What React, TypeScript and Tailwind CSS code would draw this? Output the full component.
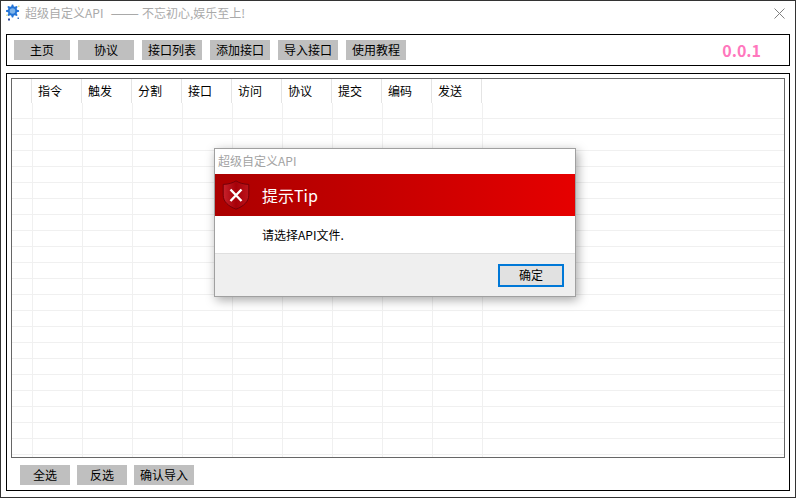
const font = "font-['Microsoft_YaHei','Noto_Sans_CJK_SC',sans-serif]";

const topButtons = [
  { label: "主页", width: "w-14" },
  { label: "协议", width: "w-14" },
  { label: "接口列表", width: "w-[60px]" },
  { label: "添加接口", width: "w-[60px]" },
  { label: "导入接口", width: "w-[60px]" },
  { label: "使用教程", width: "w-[60px]" },
];

const columns = ["指令", "触发", "分割", "接口", "访问", "协议", "提交", "编码", "发送"];
const rows = Array.from({ length: 23 }, (_, i) => i);

// 8-tooth gear outline around (12.5, 11)
const gearPoints = Array.from({ length: 32 }, (_, i) => {
  const a = ((i - 0.5) * Math.PI) / 16;
  const r = i % 4 < 2 ? 6.6 : 4.7;
  return `${(12.5 + r * Math.cos(a)).toFixed(2)},${(11 + r * Math.sin(a)).toFixed(2)}`;
}).join(" ");

function GrayButton({ label, width }: { label: string; width: string }) {
  return (
    <button className={`${width} h-5 bg-[#bfbfbf] text-xs leading-5 text-black`}>
      {label}
    </button>
  );
}

function AppIcon() {
  return (
    <svg width="15" height="18" viewBox="6 4 15 18" className="shrink-0">
      <polygon points={gearPoints} fill="#2273d6" />
      <circle cx="12.500" cy="11" r="2.800" fill="#7fb4ea" />
      <rect x="8" y="18.500" width="2" height="2" fill="#2c4aa0" />
      <rect x="17.500" y="17.500" width="1.500" height="1.500" fill="#3a6fc0" />
      <rect x="18" y="5.500" width="1.500" height="1.500" fill="#dfe39a" />
      <rect x="6" y="14.500" width="1.500" height="1.500" fill="#dfe39a" />
    </svg>
  );
}

function ShieldIcon() {
  return (
    <svg width="28" height="30" viewBox="0 0 28 30" className="shrink-0">
      <defs>
        <linearGradient id="shieldFill" x1="0" y1="0" x2="1" y2="0">
          <stop offset="0" stopColor="#c8222c" />
          <stop offset="0.500" stopColor="#a60008" />
          <stop offset="1" stopColor="#bc141c" />
        </linearGradient>
      </defs>
      <path
        d="M14 .8c3 2.200 7.500 3.400 12.800 3.600v10.800c0 6.500-5.400 11.200-12.800 14-7.400-2.800-12.800-7.500-12.800-14V4.400C6.500 4.200 11 3 14 .8z"
        fill="url(#shieldFill)"
        stroke="#740008"
        strokeWidth="1"
      />
      <path d="M8.500 9.500l11 11.500M19.500 9.500l-11 11.500" stroke="#fff" strokeWidth="2.400" />
    </svg>
  );
}

export default function App() {
  return (
    <div className={`${font} relative flex h-[498px] w-[796px] flex-col overflow-hidden border border-[#333] bg-white`}>
      <div className="flex h-[33px] items-center pl-[5px] pr-[10px] pb-[9px]">
        <AppIcon />
        <span className="ml-1 flex items-center text-xs text-[#a9a9a9]">
          超级自定义API
          <span className="ml-[7px] mr-[3px] pb-[3px] text-[17px] leading-none">——</span>
          不忘初心,娱乐至上!
        </span>
        <svg width="11" height="11" viewBox="0 0 11 11" className="ml-auto">
          <path d="M.5.500l10 10M10.500.500l-10 10" stroke="#808080" strokeWidth="1" />
        </svg>
      </div>

      <div className="mx-[5px] flex h-8 items-center gap-2 border border-black pl-[7px] pr-[28px]">
        {topButtons.map((b) => (
          <GrayButton key={b.label} label={b.label} width={b.width} />
        ))}
        <span className="ml-auto text-base font-bold text-[#ff77bd]">0.0.1</span>
      </div>

      <div className="mx-[5px] mt-[7px] h-[418px] border border-black px-1 pt-1">
        <div className="h-[380px] overflow-hidden border border-[#666]">
          <div className="flex h-6">
            <div className="w-5 shrink-0 border-r border-[#e4e4e4]" />
            {columns.map((c) => (
              <div key={c} className="w-[50px] shrink-0 border-r border-[#e4e4e4] pl-[6px] text-xs leading-6 text-black">
                {c}
              </div>
            ))}
          </div>
          {rows.map((r) => (
            <div key={r} className="flex h-4 border-b border-[#f0f0f0]">
              <div className="w-[21px] shrink-0 border-r border-[#f0f0f0]" />
              {columns.map((c) => (
                <div key={c} className="h-full w-[50px] shrink-0 border-r border-[#f0f0f0]" />
              ))}
            </div>
          ))}
        </div>
        <div className="ml-[9px] mt-[7px] flex gap-[7px]">
          <GrayButton label="全选" width="w-[50px]" />
          <GrayButton label="反选" width="w-[50px]" />
          <GrayButton label="确认导入" width="w-[60px]" />
        </div>
      </div>

      <div className="absolute left-[213px] top-[147px] flex h-[149px] w-[362px] flex-col border border-[#a0a0a0] bg-white shadow-[2px_3px_10px_rgba(0,0,0,0.35)]">
        <div className="flex h-[25px] shrink-0 items-center pb-[2px] pl-[3px] text-xs text-[#a3a3a3]">超级自定义API</div>
        <div className="flex h-[42px] shrink-0 items-center bg-gradient-to-r from-[#ab0000] to-[#e60000] pl-[7px]">
          <ShieldIcon />
          <span className="ml-[12px] text-base text-white">提示Tip</span>
        </div>
        <div className="flex h-[37px] shrink-0 items-center pl-[47px] text-xs text-black">请选择API文件.</div>
        <div className="flex flex-1 items-center justify-end border-t border-[#dfdfdf] bg-[#efefef] pr-[11px]">
          <button className="h-[23px] w-[66px] border-2 border-[#0078d7] bg-[#e1e1e1] text-xs text-black">确定</button>
        </div>
      </div>
    </div>
  );
}
